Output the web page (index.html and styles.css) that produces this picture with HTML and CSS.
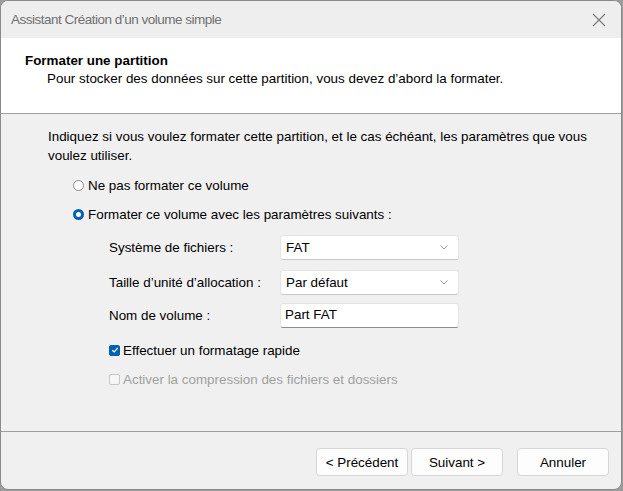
FILE: index.html
```html
<!DOCTYPE html>
<html lang="fr">
<head>
<meta charset="utf-8">
<title>Assistant Création d'un volume simple</title>
<link rel="stylesheet" href="styles.css">
</head>
<body>
<div class="window">
  <div class="titlebar">
    <span class="title">Assistant Création d’un volume simple</span>
    <svg class="close" width="14" height="14" viewBox="0 0 14 14"><path d="M1 1 L13 13 M13 1 L1 13" stroke="#7a7a7a" stroke-width="1.1" fill="none"/></svg>
  </div>
  <div class="header">
    <div class="h-title">Formater une partition</div>
    <div class="h-sub">Pour stocker des données sur cette partition, vous devez d’abord la formater.</div>
  </div>
  <div class="content">
    <p class="intro">Indiquez si vous voulez formater cette partition, et le cas échéant, les paramètres que vous voulez utiliser.</p>
    <div class="radio-row r1"><span class="radio"></span>Ne pas formater ce volume</div>
    <div class="radio-row r2"><span class="radio on"></span>Formater ce volume avec les paramètres suivants :</div>
    <div class="fields">
      <div class="field">
        <span class="label">Système de fichiers :</span>
        <div class="combo"><span>FAT</span><svg class="chev" width="8" height="5" viewBox="0 0 8 5"><path d="M0.5 0.5 L4 4 L7.5 0.5" stroke="#9a9a9a" fill="none" stroke-width="1"/></svg></div>
      </div>
      <div class="field">
        <span class="label">Taille d’unité d’allocation :</span>
        <div class="combo"><span>Par défaut</span><svg class="chev" width="8" height="5" viewBox="0 0 8 5"><path d="M0.5 0.5 L4 4 L7.5 0.5" stroke="#9a9a9a" fill="none" stroke-width="1"/></svg></div>
      </div>
      <div class="field f3">
        <span class="label">Nom de volume :</span>
        <div class="input">Part FAT</div>
      </div>
      <div class="check-row c1"><span class="check on"><svg width="8" height="8" viewBox="0 0 8 8"><path d="M1.3 4.2 L3.2 6 L6.8 2" stroke="#fff" stroke-width="1.2" fill="none"/></svg></span>Effectuer un formatage rapide</div>
      <div class="check-row c2 disabled"><span class="check"></span>Activer la compression des fichiers et dossiers</div>
    </div>
  </div>
  <div class="footer">
    <button class="btn">&lt; Précédent</button>
    <button class="btn">Suivant &gt;</button>
    <button class="btn cancel">Annuler</button>
  </div>
</div>
</body>
</html>
```

FILE: styles.css
```css
html, body {
  margin: 0;
  padding: 0;
}
body {
  width: 623px;
  height: 491px;
  background: #9c9c9c;
  font-family: "Liberation Sans", Arial, sans-serif;
  font-size: 13.4px;
  color: #000;
  overflow: hidden;
}
.window {
  box-sizing: border-box;
  width: 622px;
  height: 490px;
  border: 1px solid #8a8a8a;
  border-radius: 8px;
  background: #f0f0f0;
  overflow: hidden;
  display: flex;
  flex-direction: column;
}
.titlebar {
  height: 37px;
  flex: none;
  background: #eeeeee;
  display: flex;
  align-items: center;
  justify-content: space-between;
  padding: 0 15px 0 10px;
}
.title {
  font-size: 13.5px;
  letter-spacing: -0.5px;
  color: #707070;
}
.close {
  display: block;
}
.header {
  flex: none;
  background: #fff;
  border-bottom: 1px solid #a0a0a0;
  box-sizing: border-box;
  height: 76px;
  padding: 15px 0 0 24px;
}
.h-title {
  font-weight: bold;
  line-height: 15px;
}
.h-sub {
  margin-top: 3px;
  padding-left: 22px;
  line-height: 15px;
}
.content {
  flex: 1;
  padding: 0 0 0 47px;
  border-bottom: 1px solid #a0a0a0;
}
.intro {
  margin: 13px 0 0;
  width: 560px;
  line-height: 19px;
}
.radio-row {
  display: flex;
  align-items: center;
  padding-left: 25px;
  height: 16px;
}
.r1 { margin-top: 12px; }
.r2 { margin-top: 13px; }
.radio {
  box-sizing: border-box;
  width: 11px;
  height: 11px;
  border: 1px solid #8a8a8a;
  border-radius: 50%;
  background: #fff;
  margin-right: 4px;
}
.radio.on {
  border: 3px solid #0061b5;
  background: #fff;
}
.fields {
  padding-left: 61px;
  margin-top: 13px;
}
.field {
  display: flex;
  align-items: center;
  height: 25px;
  margin-top: 10px;
}
.field:first-child { margin-top: 0; }
.field.f3 { margin-top: 8px; }
.label {
  width: 171px;
  flex: none;
}
.combo, .input {
  box-sizing: border-box;
  width: 179px;
  height: 25px;
  background: #fff;
  border: 1px solid #e4e4e4;
  border-bottom-color: #c8c8c8;
  border-radius: 3px;
  display: flex;
  align-items: center;
  justify-content: space-between;
  padding: 0 10px 0 5px;
}
.input {
  border-bottom: 1px solid #8d8d8d;
  padding-left: 4px;
  padding-bottom: 3px;
}
.chev { display: block; }
.check-row {
  display: flex;
  align-items: center;
  height: 16px;
}
.c1 { margin-top: 14px; }
.c2 { margin-top: 13px; }
.check {
  box-sizing: border-box;
  width: 11px;
  height: 11px;
  border: 1px solid #c8c8c8;
  border-radius: 2px;
  background: #f6f6f6;
  margin-right: 3px;
  display: flex;
  align-items: center;
  justify-content: center;
}
.check.on {
  background: #0061b5;
  border-color: #0061b5;
}
.check svg { display: block; }
.disabled { color: #a0a0a0; }
.footer {
  flex: none;
  height: 57px;
  display: flex;
  align-items: flex-start;
  padding: 16px 0 0 315px;
  box-sizing: border-box;
}
.btn {
  box-sizing: border-box;
  width: 92px;
  height: 28px;
  background: #fdfdfd;
  border: 1px solid #d6d6d6;
  border-radius: 4px;
  font-family: inherit;
  font-size: 13.4px;
  color: #000;
  padding: 0;
  margin-right: 3px;
}
.btn.cancel {
  margin-left: 11px;
}
```
